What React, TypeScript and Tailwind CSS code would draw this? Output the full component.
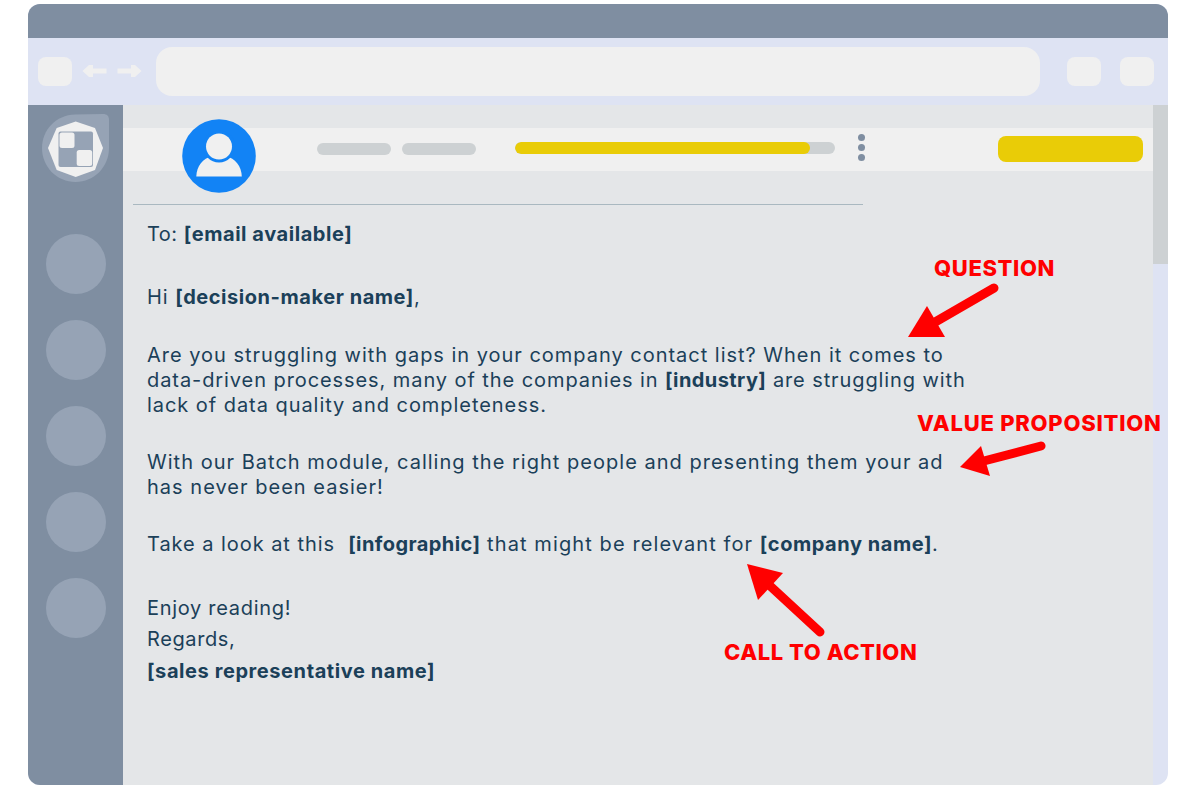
const sideDots = [0, 1, 2, 3, 4];

const NavArrow = ({ flip }: { flip?: boolean }) => (
  <svg width="25" height="14" viewBox="0 0 25 14" className={flip ? "-scale-x-100" : ""}>
    <path d="M0.5 7 L7 1 L11 1 L11 4.5 L24.5 4.5 L24.5 9.5 L11 9.5 L11 13 L7 13 Z" fill="#f0f0f0" />
  </svg>
);

const Logo = () => (
  <svg width="68" height="69" viewBox="42 114 68 69" className="block">
    <path
      d="M42 148 C42 130 56 115 75 114.500 L103 114 C107 114 109 116 109 120 L109 148 C109 167 94 182 75.500 182 C57 182 42 167 42 148 Z"
      fill="#96a3b5"
    />
    <polygon points="75.700,121.500 95,128 103,148 95,170 75.700,177 56.700,170 48,148 56.700,128" fill="#f0f0f0" />
    <rect x="58.500" y="131.500" width="34.500" height="35.500" rx="2" fill="#96a3b5" />
    <rect x="59.500" y="132.500" width="15" height="15.500" rx="2.500" fill="#f0f0f0" />
    <rect x="76.700" y="150" width="15.500" height="16" rx="2.500" fill="#f0f0f0" />
  </svg>
);

const Avatar = () => (
  <svg width="74" height="74" viewBox="0 0 74 74" className="block">
    <circle cx="37" cy="37" r="36.800" fill="#1283f5" />
    <path d="M14.300 57.500 C14.500 47 21 39.500 30 37 L44 37 C53 39.500 59.500 47 59.800 57.500 Z" fill="#f0f0f0" />
    <circle cx="37" cy="27.500" r="16" fill="#1283f5" />
    <circle cx="37" cy="27.500" r="13" fill="#f0f0f0" />
  </svg>
);

// red call-outs sit on top of the email text
const Annotations = () => (
  <>
    <svg width="1200" height="800" viewBox="0 0 1200 800" className="absolute left-0 top-0 pointer-events-none">
      <g stroke="#ff0000" strokeWidth="9" strokeLinecap="round" fill="none">
        <line x1="994" y1="288" x2="930" y2="325" />
        <line x1="1041" y1="446" x2="980" y2="462" />
        <line x1="820" y1="632" x2="768" y2="584" />
      </g>
      <g fill="#ff0000">
        <polygon points="908,337 927,306 945,337" />
        <polygon points="960,467 981,446 990,476" />
        <polygon points="747,564 783,573 758,600" />
      </g>
    </svg>
    <span className="absolute left-[934px] top-[255px] text-[22px] leading-[26px] font-extrabold tracking-[0.6px] text-[#ff0000]">QUESTION</span>
    <span className="absolute left-[917px] top-[410px] text-[22px] leading-[26px] font-extrabold tracking-[0.75px] text-[#ff0000] whitespace-nowrap">VALUE PROPOSITION</span>
    <span className="absolute left-[724px] top-[639px] text-[22px] leading-[26px] font-extrabold tracking-[0.55px] text-[#ff0000] whitespace-nowrap">CALL TO ACTION</span>
  </>
);

export default function App() {
  return (
    <div className="relative w-[1200px] h-[800px] bg-white overflow-hidden pt-1 px-7 font-['Inter',sans-serif]">
      <div className="w-[1140px] h-[781px] rounded-xl overflow-hidden flex flex-col bg-[#dee3f3]">
        {/* title bar */}
        <div className="h-[34px] shrink-0 bg-[#7f8ea1]" />

        {/* browser toolbar */}
        <div className="h-[67px] shrink-0 flex items-center pl-2.5 pr-3.5">
          <div className="w-[34px] h-[29px] rounded-lg bg-[#f0f0f0]" />
          <div className="ml-2.5 flex items-center gap-2.5 -mt-px">
            <NavArrow />
            <NavArrow flip />
          </div>
          <div className="ml-[14px] w-[885px] h-[49px] rounded-2xl bg-[#f0f0f0]" />
          <div className="ml-[27px] w-[34px] h-[29px] rounded-lg bg-[#f0f0f0]" />
          <div className="ml-[19px] w-[34px] h-[29px] rounded-lg bg-[#f0f0f0]" />
        </div>

        <div className="flex-1 flex min-h-0">
          {/* sidebar */}
          <div className="w-[95px] shrink-0 bg-[#7f8ea1] flex flex-col items-center">
            <div className="mt-[9px] ml-[1px]">
              <Logo />
            </div>
            <div className="mt-[51px] flex flex-col gap-[26px]">
              {sideDots.map((d) => (
                <div key={d} className="w-[60px] h-[60px] rounded-full bg-[#96a3b5]" />
              ))}
            </div>
          </div>

          {/* mail pane */}
          <div className="w-[1030px] shrink-0 bg-[#e4e6e8] text-[#1b4059]">
            <div className="mt-[23px] h-[43px] bg-[#f0f0f0] flex items-start">
              <div className="ml-[59px] w-[74px] h-[43px] shrink-0 -mt-[9px]">
                <Avatar />
              </div>
              <div className="ml-[61px] mt-[15px] w-[74px] h-3 rounded-full bg-[#cdd1d3]" />
              <div className="ml-[11px] mt-[15px] w-[74px] h-3 rounded-full bg-[#cdd1d3]" />
              <div className="ml-[39px] mt-[14px] w-[320px] h-3 rounded-full bg-[#cdd1d3] overflow-hidden">
                <div className="h-full w-[295px] rounded-full bg-[#e9cc07]" />
              </div>
              <div className="ml-[23px] mt-[6px] flex flex-col gap-[3px]">
                <div className="w-[7px] h-[7px] rounded-full bg-[#7f8ea1]" />
                <div className="w-[7px] h-[7px] rounded-full bg-[#7f8ea1]" />
                <div className="w-[7px] h-[7px] rounded-full bg-[#7f8ea1]" />
              </div>
              <div className="ml-[133px] mt-2 w-[145px] h-[26px] rounded-lg bg-[#e9cc07]" />
            </div>

            <div className="mt-[33px] ml-[10px] w-[730px] h-px bg-[#a9b8c0]" />

            <div className="ml-6 text-[20px] leading-[25px] tracking-[0.95px]">
              <p className="mt-[17px] tracking-[0.5px]">
                To: <b className="font-bold tracking-[0.55px]">[email available]</b>
              </p>
              <p className="mt-[38px]">
                Hi <b className="font-bold tracking-[0.55px]">[decision-maker name]</b>,
              </p>
              <p className="mt-[33px]">
                <span className="tracking-[0.98px]">Are you struggling with gaps in your company contact list? When it comes to</span>
                <br />
                <span className="tracking-[0.92px]">data-driven processes, many of the companies in</span> <b className="font-bold tracking-[0.42px]">[industry]</b> <span className="tracking-[0.9px]">are struggling with</span>
                <br />
                lack of data quality and completeness.
              </p>
              <p className="mt-8 tracking-[1.02px]">
                With our Batch module, calling the right people and presenting them your ad
                <br />
                has never been easier!
              </p>
              <p className="mt-[32px]">
                Take a look at this&nbsp; <b className="font-bold tracking-[0.42px]">[infographic]</b> <span className="tracking-[1.1px]">that might be relevant for</span> <b className="font-bold tracking-[0.55px]">[company name]</b>.
              </p>
              <p className="mt-[39px] tracking-[0.7px]">Enjoy reading!</p>
              <p className="mt-[6px] tracking-[0.6px]">Regards,</p>
              <p className="mt-[7px] font-bold tracking-[0.58px]">[sales representative name]</p>
            </div>
          </div>

          {/* scrollbar */}
          <div className="flex-1">
            <div className="h-[159px] bg-[#cdd1d3]" />
          </div>
        </div>
      </div>
      <Annotations />
    </div>
  );
}
